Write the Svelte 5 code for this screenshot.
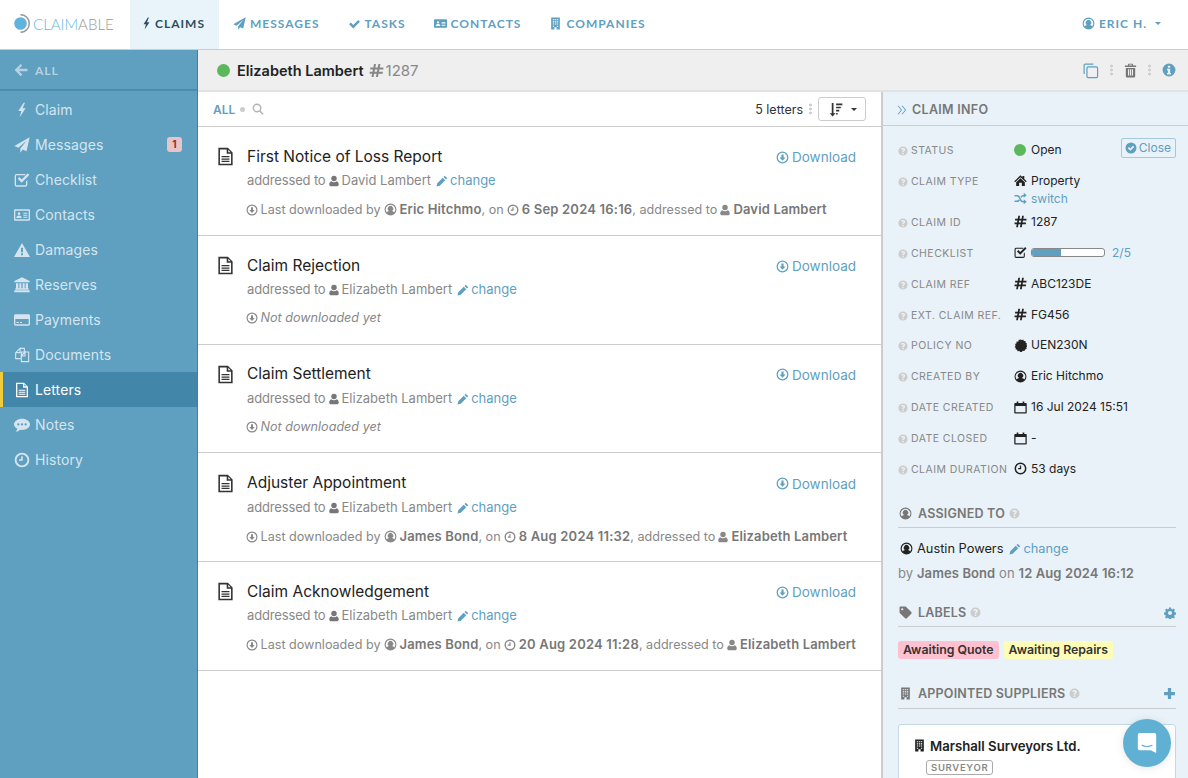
<script>
  const P = {
    bolt: 'M14.5 1 6.5 13.5H11L8.5 23 17.5 9.5H12.8L16.5 1z',
    plane: 'M23.5 .5 .5 13.6l6.2 2.5L19.5 5 9.5 17.3v6.2l3.7-4.6 5.6 2.3z',
    check: 'M2 13.2 5.2 10l4.6 4.6L18.8 5.6 22 8.8 9.8 21z',
    checkbox: 'M3.5 3H17v2H4a1 1 0 0 0-1 1v13a1 1 0 0 0 1 1h13a1 1 0 0 0 1-1v-5l2-2v7a3 3 0 0 1-3 3H4a3 3 0 0 1-3-3V6a3 3 0 0 1 2.5-3zM5.5 10 8 7.6l3.5 3.5L20.7 2 23 4.4 11.5 16z',
    idcardSolid: 'M1.5 4h21A1.5 1.5 0 0 1 24 5.5v13a1.5 1.5 0 0 1-1.500 1.500h-21A1.500 1.500 0 0 1 0 18.500v-13A1.500 1.500 0 0 1 1.500 4zM7.500 8a2 2 0 1 0 0 4 2 2 0 0 0 0-4zM3.500 16.500h8c0-2.500-1.500-3.700-4-3.700s-4 1.200-4 3.700zM14 9v1.500h7V9zM14 12v1.500h7V12zM14 15v1.500h7V15z',
    idcard: 'M1.500 3.500h21A1.500 1.500 0 0 1 24 5v14a1.500 1.500 0 0 1-1.500 1.500h-21A1.500 1.500 0 0 1 0 19V5a1.500 1.500 0 0 1 1.500-1.500zM2 5.500v13h20v-13zM7.500 8a2 2 0 1 1 0 4 2 2 0 0 1 0-4zM3.500 16.500c0-2.500 1.500-3.700 4-3.700s4 1.200 4 3.700zM14 8.500h6V10h-6zM14 11.500h6V13h-6zM14 14.500h6V16h-6z',
    building: 'M4 1h16v22h-6v-4h-4v4H4zM7 4v2h2.500V4zM10.800 4v2h2.500V4zM14.500 4v2H17V4zM7 8v2h2.500V8zM10.800 8v2h2.500V8zM14.500 8v2H17V8zM7 12v2h2.500v-2zM10.800 12v2h2.500v-2zM14.500 12v2H17v-2zM7 16v2h2.500v-2zM14.500 16v2H17v-2z',
    userc: 'M12 1a11 11 0 1 0 0 22 11 11 0 0 0 0-22zM12 3a9 9 0 0 1 7 14.600c-.8-1.700-2.400-2.600-4.300-2.900a5 5 0 1 0-5.400 0c-1.900.3-3.500 1.200-4.300 2.900A9 9 0 0 1 12 3z',
    copy: 'M16 3H4.500A1.500 1.500 0 0 0 3 4.500V17M8.500 7h12A1.500 1.500 0 0 1 22 8.500v12a1.500 1.500 0 0 1-1.500 1.500h-12A1.500 1.500 0 0 1 7 20.500v-12A1.500 1.500 0 0 1 8.500 7z',
    trash: 'M9 1h6a1 1 0 0 1 1 1v2h5v2.500H3V4h5V2a1 1 0 0 1 1-1zM10 2.500V4h4V2.500zM4.500 8h15v13a2 2 0 0 1-2 2h-11a2 2 0 0 1-2-2zM8 10v10h1.800V10zM11.100 10v10h1.800V10zM14.200 10v10H16V10z',
    info: 'M12 1a11 11 0 1 0 0 22 11 11 0 0 0 0-22zM10 4.500h4v3.500h-4zM8.500 10h5.500v7h1.500v2.500h-7V17H10v-4.500H8.500z',
    q: 'M12 1a11 11 0 1 0 0 22 11 11 0 0 0 0-22zM10.300 16.500h3.400v3.300h-3.400zM12 4.500c3 0 5.200 1.800 5.200 4.300 0 2.600-3.500 3.200-3.500 5.200v.7h-3.400v-1c0-3 3.300-3.600 3.300-4.900 0-.7-.7-1.200-1.700-1.200-1.100 0-1.800.7-2.100 1.500L7 7.600C7.700 5.800 9.500 4.500 12 4.500z',
    dl: 'M12 1a11 11 0 1 0 0 22 11 11 0 0 0 0-22zM12 3.300a8.700 8.700 0 1 1 0 17.400 8.700 8.700 0 0 1 0-17.400zM10 6.500h4v5.500h3.500L12 18l-5.500-6H10z',
    clock: 'M12 1a11 11 0 1 0 0 22 11 11 0 0 0 0-22zM12 3.800a8.200 8.200 0 1 1 0 16.400 8.200 8.200 0 0 1 0-16.400zM10.800 6.500h2.400v6.800H7.500v-2.400h3.300z',
    person: 'M12 1.500a5.500 5.500 0 1 1 0 11 5.500 5.500 0 0 1 0-11zM6.500 12.500c1.500 1.300 3.400 1.900 5.500 1.900s4-.6 5.500-1.900c2.500.6 4 3.300 4 6.500 0 2.400-1.500 3.500-3.500 3.500H6c-2 0-3.500-1.100-3.500-3.500 0-3.200 1.500-5.900 4-6.500z',
    pencil: 'M17.500 1.500 22.500 6.500 20 9 15 4zM13.500 5.500l5 5L7.500 21.500 1 23l1.500-6.500z',
    home: 'M12 2.500 15.500 5.800V3.500H19v5.600l4.500 4.200-1.500 1.700L12 5.800 2 15 .5 13.300zM12 8l8 7.300V22h-5.500v-6h-5v6H4v-6.700z',
    shuffle: 'M1 5.500h4.500c4.500 0 5.500 3.200 7 6.500s2 4.500 5.500 4.500V13.500l5.500 4.500-5.500 4.500V19.500c-5.500 0-6.700-3-8-6S7.800 8.500 5.500 8.500H1zM18 1.500 23.500 6 18 10.500V8.500c-2.200 0-3.300 1-4.200 2.500l-1.700-2.700C13.500 6.500 15.300 5.500 18 5.500zM1 15.500h4.500c1.800 0 2.800-1 3.500-2.200l1.700 2.700c-1.200 1.500-2.800 2.500-5.200 2.500H1z',
    hash: 'M8 1.500h3.200l-1 5.500H14l1-5.500h3.200l-1 5.500H23v3.200h-6.400l-.7 3.600H22v3.200h-6.700l-1 5.500H11l1-5.500H8.300l-1 5.500H4l1-5.500H1v-3.200h4.600l.7-3.600H2V7h4.900zM9.600 10.200l-.7 3.600h3.800l.7-3.600z',
    cert: 'M12 0l2.300 2.300L17 .8l1.200 2.900 3.100-.1.100 3.100 2.600 1.400-1 3 2 2.300-2.300 2.100.6 3-3 .8-.9 3-3-.7-2.200 2.300L12 24l-2.400-1.900-2.900.7-.9-3-3-.8.6-3L1 14.600 3 12.300l-1-3 2.600-1.400.1-3.100 3.100.1L9 .8l2.700 1.500z',
    cal: 'M5 1h3v2.500h8V1h3v2.500h3A1.500 1.500 0 0 1 23.500 5v16.500A1.500 1.500 0 0 1 22 23H2a1.500 1.500 0 0 1-1.500-1.500V5A1.500 1.500 0 0 1 2 3.500h3zM2.800 9v11.700h18.400V9z',
    tag: 'M1 2.500A1.500 1.500 0 0 1 2.500 1h9c.7 0 1.200.3 1.700.8l9.500 9.500c.9.900.9 2.300 0 3.200l-8.200 8.200c-.9.900-2.300.9-3.200 0L1.800 13.200A2.500 2.500 0 0 1 1 11.500zM6 4a2 2 0 1 0 0 4 2 2 0 0 0 0-4z',
    gear: 'M10 1h4l.6 3c.7.2 1.400.5 2 .9l2.600-1.700 2.800 2.800-1.700 2.600c.4.6.7 1.300.9 2l3 .6v4l-3 .6c-.2.700-.5 1.400-.9 2l1.700 2.600-2.800 2.800-2.600-1.700c-.6.4-1.300.7-2 .9l-.6 3h-4l-.6-3c-.7-.2-1.400-.5-2-.9l-2.600 1.700-2.800-2.800 1.700-2.600c-.4-.6-.7-1.300-.9-2l-3-.6v-4l3-.6c.2-.7.5-1.400.9-2L2.100 6l2.800-2.800 2.600 1.700c.6-.4 1.300-.7 2-.9zM12 8a4 4 0 1 0 0 8 4 4 0 0 0 0-8z',
    plus: 'M9 2h6v7h7v6h-7v7H9v-7H2V9h7z',
    warn: 'M12 1.500 24 22.500H0zM10.500 8.500v7h3v-7zM10.500 17v3h3v-3z',
    bank: 'M12 .5 23.500 6v2h-23V6zM3 9.500h3.500V17H8V9.500h3V17h2V9.500h3V17h1.500V9.500H21V17h1v2H2v-2h1zM.5 20h23v3H.5z',
    card: 'M2 3.500h20A2 2 0 0 1 24 5.500v13a2 2 0 0 1-2 2H2a2 2 0 0 1-2-2v-13a2 2 0 0 1 2-2zM2 10.500v7.500a.5.5 0 0 0 .5.5h19a.5.5 0 0 0 .5-.5v-7.500zM3.500 15h4v1.500h-4zM9 15h3v1.500H9z',
    docs: 'M9 2H15.500V7M10 17.500H2.500V8.500L9 2V8.500H2.500M11 7.500H22V22H11zM11 13.500 16.500 7.500V13.500z',
    file: 'M3 1h12l6 6v16H3zM5 3v18h14V8.500h-5.500V3zM15.500 3.500v3h3zM7 11.500h10V13H7zM7 14.500h10V16H7zM7 17.500h10V19H7z',
    comment: 'M12 2.500c6.500 0 12 3.700 12 8.500s-5.500 8.500-12 8.500c-1 0-2-.1-2.900-.3C7.500 21 5 22 2.500 22c1.300-1.200 2.200-2.800 2.400-4.500C1.900 16 0 13.700 0 11c0-4.800 5.500-8.500 12-8.500zM6.500 9.500a1.700 1.700 0 1 0 0 3.400 1.700 1.700 0 0 0 0-3.400zM12 9.500a1.700 1.700 0 1 0 0 3.400 1.700 1.700 0 0 0 0-3.400zM17.500 9.500a1.700 1.700 0 1 0 0 3.400 1.700 1.700 0 0 0 0-3.400z',
    search: 'M10 1a9 9 0 0 1 7.200 14.400l6 6-2.300 2.300-6-6A9 9 0 1 1 10 1zM10 4a6 6 0 1 0 0 12 6 6 0 0 0 0-12z',
    back: 'M11.500 1.500 14.300 4.300 8.700 10H23v4H8.700l5.600 5.700-2.800 2.800L1 12z',
    chev2: 'M3 3.500h2.200l7 8.500-7 8.500H3l7-8.500zM11 3.500h2.200l7 8.500-7 8.500H11l7-8.500z',
    sort: 'M6 1.500h2.800v16.500H12L7.400 23 2.800 18H6zM13 2.500h10v2.500H13zM13 7.500h7.500V10H13zM13 12.500h5V15h-5zM13 17.500h2.500V20H13z',
    circlecheck: 'M12 1a11 11 0 1 0 0 22 11 11 0 0 0 0-22zM5.500 12.500 8 10l2.800 2.800L16 7.500l2.500 2.500-7.700 7.700z',
    speech: 'M4 1h16a2 2 0 0 1 2 2v20l-6-3H4a2 2 0 0 1-2-2V3a2 2 0 0 1 2-2z'
  };
  const lineIcons = ['copy', 'docs'];
  const top = [['plane','MESSAGES'],['check','TASKS'],['idcardSolid','CONTACTS'],['building','COMPANIES']];
  const side = [['bolt','Claim'],['plane','Messages',1],['checkbox','Checklist'],['idcard','Contacts'],['warn','Damages'],['bank','Reserves'],['card','Payments'],['docs','Documents'],['file','Letters'],['comment','Notes'],['clock','History']];
  const letters = [
    {t:'First Notice of Loss Report',to:'David Lambert',by:'Eric Hitchmo',on:'6 Sep 2024 16:16'},
    {t:'Claim Rejection',to:'Elizabeth Lambert'},
    {t:'Claim Settlement',to:'Elizabeth Lambert'},
    {t:'Adjuster Appointment',to:'Elizabeth Lambert',by:'James Bond',on:'8 Aug 2024 11:32'},
    {t:'Claim Acknowledgement',to:'Elizabeth Lambert',by:'James Bond',on:'20 Aug 2024 11:28'}
  ];
  const info = [
    ['hash','CLAIM ID','1287'],[null,'CHECKLIST'],['hash','CLAIM REF','ABC123DE'],['hash','EXT. CLAIM REF.','FG456'],
    ['cert','POLICY NO','UEN230N'],['userc','CREATED BY','Eric Hitchmo'],['cal','DATE CREATED','16 Jul 2024 15:51'],
    ['cal','DATE CLOSED','-'],['clock','CLAIM DURATION','53 days']
  ];
</script>

{#snippet ic(name, size = 13)}
  <svg class="ic" class:line={lineIcons.includes(name)} viewBox="0 0 24 24" width={size} height={size} aria-hidden="true"><path d={P[name]} /></svg>
{/snippet}

<div class="app">
  <header class="top">
    <div class="logo">
      <svg viewBox="0 0 19 19" width="19" height="19" aria-hidden="true"><circle cx="6.500" cy="9.500" r="6.300" fill="#5fb3dc"/><path d="M6.500 .7a8.800 8.800 0 0 1 0 17.600" fill="none" stroke="#999" stroke-width="1.500"/></svg>
      <span class="word"><b>CLAIM</b>ABLE</span>
    </div>
    <nav class="tabs">
      <a class="tab on">{@render ic('bolt', 13)}CLAIMS</a>
      {#each top as [i, l]}<a class="tab">{@render ic(i, 13)}{l}</a>{/each}
    </nav>
    <a class="me">{@render ic('userc', 13)}ERIC H.<i class="caret"></i></a>
  </header>

  <div class="body">
    <aside class="side">
      <div class="allrow">{@render ic('back', 14)}<span>ALL</span></div>
      {#each side as [i, l, n]}
        <div class="item" class:cur={l === 'Letters'}>
          <span class="sico">{@render ic(i, 16)}</span>{l}
          {#if n}<em class="badge">{n}</em>{/if}
        </div>
      {/each}
    </aside>

    <div class="content">
      <div class="head">
        <span class="dot big"></span>
        <strong>Elizabeth Lambert</strong>
        <span class="num">{@render ic('hash', 15)}1287</span>
        <span class="tools">
          <span class="b">{@render ic('copy', 17)}</span><i class="dots"></i>
          <span class="g">{@render ic('trash', 15)}</span><i class="dots"></i>
          <span class="b">{@render ic('info', 14)}</span>
        </span>
      </div>
      <div class="panes">
        <main class="list">
          <div class="bar">
            <span class="allf">ALL</span><i class="sep"></i><span class="sr">{@render ic('search', 12)}</span>
            <span class="count">5 letters</span><i class="dots lt"></i>
            <button class="sortb">{@render ic('sort', 15)}<i class="caret dark"></i></button>
          </div>
          {#each letters as l}
            <article class="letter">
              <span class="fi">{@render ic('file', 19)}</span>
              <div class="lbody">
                <div class="lhead"><h2>{l.t}</h2><a class="dlk">{@render ic('dl', 13)}Download</a></div>
                <p class="addr"><span class="pre">addressed to</span>{@render ic('person', 12)}{l.to}<a class="chg">{@render ic('pencil', 12)}change</a></p>
                {#if l.by}
                  <p class="meta">{@render ic('dl', 12)} Last downloaded by {@render ic('userc', 13)} <b>{l.by}</b>, on {@render ic('clock', 12)} <b class="dt">{l.on}</b>, addressed to {@render ic('person', 12)} <b class="nm">{l.to}</b></p>
                {:else}
                  <p class="meta">{@render ic('dl', 12)} <i>Not downloaded yet</i></p>
                {/if}
              </div>
            </article>
          {/each}
        </main>

        <section class="info">
          <div class="ihead"><span class="chev">{@render ic('chev2', 12)}</span>CLAIM INFO</div>
          <div class="props">
            <div class="row">
              <span class="lab">{@render ic('q', 10)}STATUS</span>
              <span class="val"><span class="vi"><span class="dot"></span></span>Open</span>
              <a class="close">{@render ic('circlecheck', 12)}Close</a>
            </div>
            <div class="row tall">
              <span class="lab">{@render ic('q', 10)}CLAIM TYPE</span>
              <span class="val col">
                <span><span class="vi">{@render ic('home', 13)}</span>Property</span>
                <a class="lnk"><span class="vi">{@render ic('shuffle', 13)}</span>switch</a>
              </span>
            </div>
            {#each info as [i, l, v]}
              <div class="row">
                <span class="lab">{@render ic('q', 10)}{l}</span>
                {#if i}
                  <span class="val"><span class="vi">{@render ic(i, 13)}</span>{v}</span>
                {:else}
                  <span class="val"><span class="vi">{@render ic('checkbox', 13)}</span><span class="prog"><span class="fill" style="width:40%"></span></span><a class="lnk">2/5</a></span>
                {/if}
              </div>
            {/each}
          </div>

          <h3 class="sec s1">{@render ic('userc', 13)}ASSIGNED TO<span class="hq">{@render ic('q', 11)}</span></h3>
          <p class="who">{@render ic('userc', 13)}<span>Austin Powers</span><a class="chg">{@render ic('pencil', 12)}change</a></p>
          <p class="byl">by <b>James Bond</b> on <b>12 Aug 2024 16:12</b></p>

          <h3 class="sec s2">{@render ic('tag', 13)}LABELS<span class="hq">{@render ic('q', 11)}</span><span class="act">{@render ic('gear', 12)}</span></h3>
          <div class="tags"><span class="tg pink">Awaiting Quote</span><span class="tg yel">Awaiting Repairs</span></div>

          <h3 class="sec s3">{@render ic('building', 13)}APPOINTED SUPPLIERS<span class="hq">{@render ic('q', 11)}</span><span class="act">{@render ic('plus', 13)}</span></h3>
          <div class="supplier">
            <div class="sname">{@render ic('building', 13)}Marshall Surveyors Ltd.</div>
            <span class="stype">SURVEYOR</span>
          </div>
        </section>
      </div>
    </div>
  </div>

  <button class="chat" aria-label="Chat">
    <svg viewBox="0 0 24 24" width="22" height="24" aria-hidden="true"><path d={P.speech} fill="#fff"/><path d="M6.500 14.500c3 1.800 8 1.800 11 0" fill="none" stroke="#5fb0d3" stroke-width="1.200" stroke-linecap="round"/></svg>
  </button>
</div>

<style>
  :global(body) { margin: 0; font-family: Inter, "Liberation Sans", sans-serif; color: #222; background: #fff; }
  .app { height: 100vh; display: flex; flex-direction: column; overflow: hidden; position: relative; }
  .ic { fill: currentColor; fill-rule: evenodd; flex: none; vertical-align: -2px; }
  .ic.line { fill: none; stroke: currentColor; stroke-width: 1.700; }
  p, h2, h3 { margin: 0; }

  .top { height: 49px; flex: none; display: flex; align-items: stretch; border-bottom: 1px solid #ccc; background: #fff; }
  .logo { width: 130px; display: flex; align-items: center; padding: 0 0 2px 14px; box-sizing: border-box; }
  .word { font: 300 15px Lato, sans-serif; color: #999; }
  .word b { font-weight: 300; color: #67b8de; }
  .tabs { display: flex; }
  .tab { display: flex; align-items: center; gap: 4px; padding: 0 14px 2px; font: 700 12px Lato, sans-serif; letter-spacing: 1px; color: #5f9fc0; }
  .tab.on { background: #e9f4fa; color: #2f4d62; gap: 5px; }
  .tab.on .ic { margin: 0 -3px 0 -4px; }
  .me { margin-left: auto; padding: 0 27px 2px 0; display: flex; align-items: center; gap: 4px; font: 700 12px Lato, sans-serif; letter-spacing: 1px; color: #5f9fc0; }
  .caret { width: 0; height: 0; border: 3px solid transparent; border-top: 3px solid currentColor; border-bottom: 0; margin-left: 4px; }
  .caret.dark { color: #333; margin-left: 8px; }

  .body { flex: 1; display: flex; min-height: 0; }
  .side { width: 197px; flex: none; background: #5f9fc0; border-right: 1px solid #3f7fa2; color: #d5e5ef; font-size: 14px; letter-spacing: .1px; }
  .allrow { height: 41px; box-sizing: border-box; border-bottom: 2px solid #4b8cae; display: flex; align-items: center; padding: 1px 0 0 14px; gap: 7px; font: 700 12px Lato, sans-serif; letter-spacing: 1px; color: #b6d2e2; margin-bottom: 1px; }
  .item { height: 35px; display: flex; align-items: center; padding: 0 15px 0 14px; box-sizing: border-box; }
  .sico { width: 21px; display: flex; }
  .item.cur { background: #4286a9; color: #fff; border-left: 3px solid #f2cb3c; padding-left: 11px; }
  .badge { margin-left: auto; width: 15px; height: 15px; border-radius: 3px; background: #e8c4c6; color: #8c2d31; font: 700 10px/15px Inter, sans-serif; text-align: center; }

  .content { flex: 1; min-width: 0; display: flex; flex-direction: column; }
  .head { height: 40px; flex: none; background: #efefef; display: flex; align-items: center; padding: 0 12px 0 19px; border-bottom: 2px solid #e2e2e2; }
  .dot { width: 12px; height: 12px; border-radius: 50%; background: #5cb85c; display: inline-block; }
  .dot.big { width: 13px; height: 13px; margin-right: 7px; }
  .head strong { font-size: 14.500px; font-weight: 600; color: #222; }
  .num { margin-left: 5px; color: #888; font-size: 15px; display: flex; align-items: center; gap: 2px; }
  .tools { margin-left: auto; display: flex; align-items: center; gap: 11px; }
  .b { color: #5f9fc0; display: flex; } .g { color: #777; display: flex; margin: 0 -1px; }
  .dots { width: 3px; height: 12px; background: radial-gradient(circle, #d0d0d0 1.400px, transparent 1.600px) 0 0 / 3px 4px; }

  .panes { flex: 1; display: flex; min-height: 0; }
  .list { width: 683px; flex: none; background: #fff; }
  .bar { height: 34px; display: flex; align-items: center; padding: 0 15px 0 15px; border-bottom: 1px solid #ccc; font-size: 12px; }
  .allf { font-weight: 600; color: #5f9fc0; }
  .sep { width: 5px; height: 5px; border-radius: 50%; background: #ccc; margin: 0 7px 0 5px; }
  .sr { color: #b5b5b5; display: flex; }
  .count { margin-left: auto; color: #333; font-size: 12.500px; }
  .dots.lt { margin: 0 6px; }
  .sortb { width: 48px; height: 24px; background: #fff; border: 1px solid #ccc; border-radius: 3px; display: flex; align-items: center; justify-content: center; padding: 0; color: #333; }

  .letter { height: 108.800px; box-sizing: border-box; display: flex; padding: 19.300px 25px 0 20px; border-bottom: 1px solid #ccc; }
  .fi { width: 31px; margin-left: -2px; color: #333; display: flex; padding-top: 1px; align-items: flex-start; }
  .lbody { flex: 1; min-width: 0; }
  .lhead { display: flex; justify-content: space-between; align-items: center; height: 20px; }
  h2 { font-size: 15.500px; font-weight: 400; color: #222; }
  .dlk { font-size: 13.500px; color: #5f9fc0; display: flex; align-items: center; gap: 3px; margin-top: 2px; }
  .addr { margin-top: 5px; font-size: 13px; line-height: 18px; color: #888; }
  .pre { letter-spacing: -.15px; }
  .addr > .ic { color: #777; margin: 0 2px 0 2px; }
  .chg { color: #5f9fc0; margin-left: 5px; }
  .chg .ic { color: #5f9fc0; margin-right: 2px; }
  .meta { margin: 11px 0 0 -1px; font-size: 12.600px; line-height: 18px; color: #888; white-space: nowrap; }
  .meta b { font-size: 13px; font-weight: 600; color: #777; letter-spacing: .15px; }
  .meta b.dt { letter-spacing: .2px; }
  .meta b.nm { margin-left: -.5px; }
  .meta .ic { margin-right: -1px; }
  .meta .ic:has(+ .nm) { margin-left: -1.500px; }

  .info { flex: 1; min-width: 0; background: #e9f2f8; border-left: 2px solid #ccc; padding: 0 12px 0 15px; position: relative; }
  .ihead { height: 34px; margin: 0 -12px 0 -15px; padding: 2px 0 0 13px; box-sizing: border-box; border-bottom: 1px solid #ccc; display: flex; align-items: center; font-size: 12.500px; font-weight: 600; color: #777; letter-spacing: .3px; gap: 4px; }
  .chev { color: #5f9fc0; display: flex; }
  .props { padding-top: 15.100px; }
  .row { height: 30.875px; display: flex; align-items: flex-start; font-size: 12px; line-height: 18px; position: relative; }
  .row.tall { height: 41px; }
  .lab { width: 116px; flex: none; color: #888; font-size: 10.500px; letter-spacing: .45px; display: flex; align-items: center; gap: 3px; white-space: nowrap; padding-top: 1px; }
  .lab .ic { color: #ccc; }
  .val { color: #222; display: flex; align-items: center; }
  .val.col { flex-direction: column; align-items: flex-start; }
  .vi { width: 17px; display: inline-flex; flex: none; vertical-align: -2px; }
  .lnk { color: #5f9fc0; display: inline-flex; align-items: center; }
  .close { position: absolute; right: 0; top: -3px; height: 20px; box-sizing: border-box; border: 1px solid #a5c9dc; border-radius: 2px; padding: 0 4px 0 3px; color: #5f9fc0; display: flex; align-items: center; gap: 2px; font-size: 12px; }
  .prog { width: 74px; height: 9px; background: #fff; border: 1px solid #888; border-radius: 3px; box-sizing: border-box; overflow: hidden; display: block; }
  .fill { display: block; height: 100%; background: #5f9fc0; }
  .prog + .lnk { margin-left: 7px; }

  .sec { display: flex; align-items: center; gap: 6px; font-size: 12.500px; font-weight: 600; letter-spacing: .2px; color: #777; padding: 0 0 4px 1px; border-bottom: 1px solid #ccc; line-height: 18px; }
  .sec .ic { color: #777; }
  .hq { display: inline-flex; margin-left: -2px; }
  .hq .ic { color: #ccc; }
  .act { margin-left: auto; display: flex; }
  .act .ic { color: #5f9fc0; }
  .s1 { margin-top: 14px; } .s2 { margin-top: 22px; } .s3 { margin-top: 26px; padding-bottom: 5px; }
  .who { margin: 12px 0 0 2px; font-size: 12.800px; line-height: 18px; display: flex; align-items: center; gap: 4px; color: #222; }
  .who .chg { margin-left: 2px; }
  .byl { margin-top: 6px; font-size: 13px; line-height: 18px; color: #888; letter-spacing: .1px; }
  .byl b { font-weight: 600; color: #777; }
  .tags { display: flex; gap: 5px; margin-top: 14px; }
  .tg { font-size: 12.300px; font-weight: 600; line-height: 18px; padding: 0 5px; border-radius: 3px; color: #333; }
  .pink { background: #ffc0cf; } .yel { background: #fdfdb8; }
  .supplier { margin-top: 15px; height: 90px; background: #fff; border: 1px solid #c3d9e3; border-radius: 3px; padding: 13px 14px; box-sizing: border-box; }
  .sname { font-size: 13.200px; font-weight: 600; color: #222; display: flex; align-items: center; gap: 4px; }
  .stype { display: inline-block; margin: 6px 0 0 13px; border: 1px solid #aaa; border-radius: 3px; padding: 0 4px; font-size: 9.500px; font-weight: 600; line-height: 13px; letter-spacing: .7px; color: #888; }

  .chat { position: absolute; left: 1123px; top: 719px; width: 48px; height: 48px; border: 0; border-radius: 50%; background: #5fb0d3; box-shadow: 0 1px 8px rgba(0,0,0,.1); display: flex; align-items: center; justify-content: center; padding: 0; }
</style>
